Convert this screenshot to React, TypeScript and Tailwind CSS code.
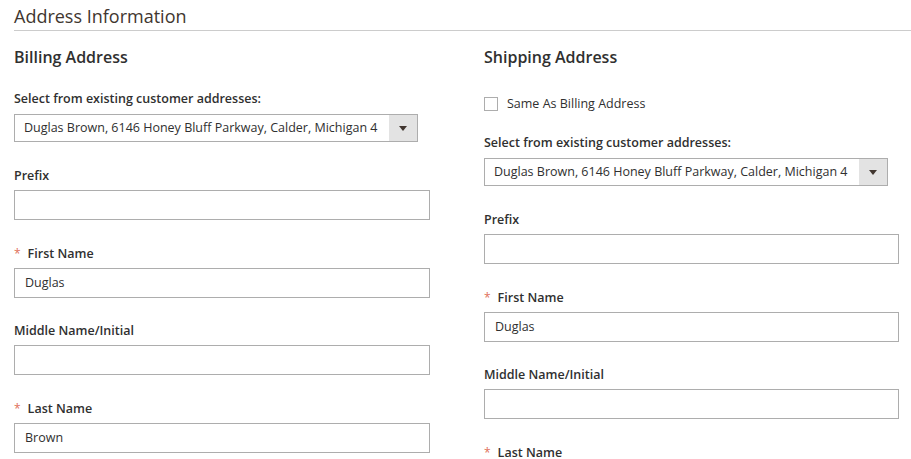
import React from "react";

const address = "Duglas Brown, 6146 Honey Bluff Parkway, Calder, Michigan 4";

function AddressSelect() {
	return (
		<div className="flex h-[28px] w-[404px] border border-[#adadad] bg-white">
			<div className="flex-1 overflow-hidden whitespace-nowrap pl-[9px] pr-[6px] text-[12.5px] leading-[26px] text-[#303030]">
				{address}
			</div>
			<div className="flex w-[28px] items-center justify-center bg-[#e3e3e3]">
				<svg width="8" height="5" viewBox="0 0 8 5">
					<path d="M0 0 L8 0 L4 5 Z" fill="#41362f" />
				</svg>
			</div>
		</div>
	);
}

function Field({
	label,
	value,
	required,
}: {
	label: string;
	value?: string;
	required?: boolean;
}) {
	return (
		<div className="mb-[24.5px]">
			<div className="mb-[5px] flex items-center text-[12.5px] font-semibold leading-[18px] text-[#303030]">
				{required && (
					<span className="mr-[7px] text-[12px] font-normal text-[#e0705a]">*</span>
				)}
				{label}
			</div>
			<div className="h-[30px] w-full border border-[#adadad] bg-white pl-[10px] text-[12.5px] leading-[28px] text-[#303030]">
				{value}
			</div>
		</div>
	);
}

function Column({ title, shipping }: { title: string; shipping?: boolean }) {
	return (
		<div className="flex flex-col">
			<h2 className="mb-[22px] text-[16px] font-semibold leading-[22px] text-[#303030]">
				{title}
			</h2>
			{shipping && (
				<label className="mb-[16px] flex h-[28px] items-center">
					<span className="mr-[9px] h-[14px] w-[14px] border border-[#adadad] bg-white" />
					<span className="text-[12.5px] text-[#303030]">Same As Billing Address</span>
				</label>
			)}
			<div className="mb-[25px]">
				<div className="mb-[6px] text-[12.5px] font-semibold leading-[18px] text-[#303030]">
					Select from existing customer addresses:
				</div>
				<AddressSelect />
			</div>
			<Field label="Prefix" />
			<Field label="First Name" value="Duglas" required />
			<Field label="Middle Name/Initial" />
			<Field label="Last Name" value="Brown" required />
		</div>
	);
}

export default function App() {
	return (
		<div className="h-[459px] overflow-hidden bg-white pl-[14px] font-['Open_Sans',sans-serif]">
			<div className="mb-[15px] border-b border-[#cccccc] pt-[2px] text-[18px] leading-[28px] text-[#41362f]">
				Address Information
			</div>
			<div className="grid grid-cols-[416px_415px] gap-x-[54px]">
				<Column title="Billing Address" />
				<Column title="Shipping Address" shipping />
			</div>
		</div>
	);
}
